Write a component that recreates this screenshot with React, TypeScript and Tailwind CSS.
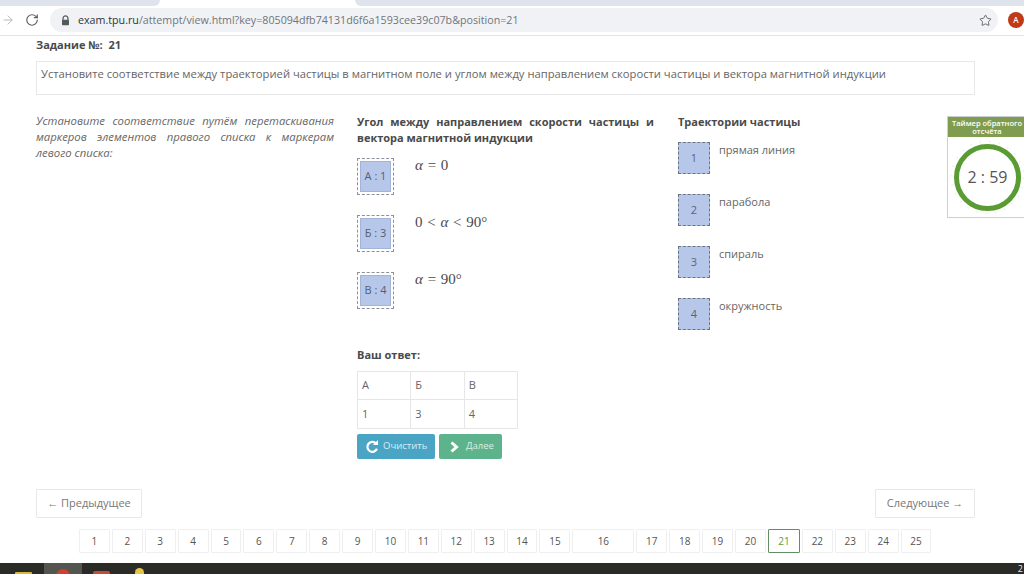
import React from "react";
import { ArrowRight, RotateCw, Star } from "lucide-react";

const sans = "font-['Open_Sans',sans-serif]";

function LeftRow({ label, children }: { label: string; children: React.ReactNode }) {
  return (
    <div className="flex h-[37px] mb-[20px]">
      <div className="w-[37px] h-[37px] border border-dashed border-[#8a909c] p-[2px] shrink-0">
        <div className="w-full h-full bg-[#b7c7ea] border border-[#a4b4d8] flex items-center justify-center text-[11px] text-[#55606f]">
          {label}
        </div>
      </div>
      <div className="ml-[21px] font-['Liberation_Serif',serif] text-[15px] leading-[14px] [word-spacing:1px] text-[#4a4a4a] whitespace-nowrap">
        {children}
      </div>
    </div>
  );
}

function RightRow({ n, text }: { n: string; text: string }) {
  return (
    <div className="flex h-[32px] mb-[20px]">
      <div className="w-[32px] h-[32px] border border-dashed border-[#6d7484] bg-[#b7c7ea] flex items-center justify-center text-[11px] text-[#5a6472] shrink-0">
        {n}
      </div>
      <div className="ml-[9px] text-[11px] leading-[16px] text-[#666] whitespace-nowrap">{text}</div>
    </div>
  );
}

function Page({ n }: { n: number }) {
  const active = n === 21;
  const wide = n === 16;
  return (
    <div
      className={`h-[24px] flex items-center justify-center text-[10px] rounded-[1px] border shrink-0 ${
        wide ? "w-[62px]" : active ? "w-[32px]" : "w-[30.9px]"
      } ${active ? "border-[#5f8f62] text-[#5f9a45]" : "border-[#efefef] text-[#555]"}`}
    >
      {n}
    </div>
  );
}

const pages = Array.from({ length: 25 }, (_, i) => i + 1);

export default function App() {
  return (
    <div className={`w-[1024px] h-[574px] overflow-hidden bg-white flex flex-col ${sans}`}>
      {/* tab strip */}
      <div className="h-[6px] flex shrink-0">
        <div className="w-[160px] bg-[#dfe3ec] rounded-br-[6px]" />
        <div className="w-[195px] bg-white" />
        <div className="flex-1 bg-[#dfe3ec] rounded-bl-[6px]" />
      </div>
      {/* toolbar */}
      <div className="h-[30px] shrink-0 flex items-center border-b border-[#e3e4e6] pb-[1px]">
        <ArrowRight size={14} strokeWidth={1.6} className="ml-[1px] text-[#b4b6ba]" />
        <RotateCw size={14} strokeWidth={2} className="ml-[10px] text-[#5c5f63]" />
        <div className="ml-[11px] w-[948px] h-[24px] shrink-0 rounded-[12px] bg-[#f0f2f5] flex items-center pl-[11px] text-[10.7px] whitespace-nowrap">
          <svg width="9" height="11" viewBox="0 0 9 11" className="shrink-0">
            <path d="M2 5V3.4a2.5 2.5 0 0 1 5 0V5" fill="none" stroke="#55585c" strokeWidth="1.2" />
            <rect x="1" y="4.8" width="7" height="5.4" rx="0.8" fill="#55585c" />
          </svg>
          <span className="ml-[8px] text-[#2f3236]">exam.tpu.ru</span>
          <span className="text-[#70757a]">/attempt/view.html?key=805094dfb74131d6f6a1593cee39c07b&amp;position=21</span>
          <Star size={13} strokeWidth={1.6} className="ml-auto mr-[6px] text-[#55585c]" />
        </div>
        <div className="ml-[10px] w-[16px] h-[16px] rounded-full bg-[#bf3a17] shrink-0 flex items-center justify-center text-white text-[8px] font-semibold">
          А
        </div>
      </div>

      {/* main */}
      <div className="flex-1 min-h-0 pl-[36px] overflow-hidden">
        <div className="mt-[1px] h-[16px] text-[11px] leading-[16px] font-bold text-[#4a4a4a]">Задание №:&nbsp; 21</div>
        <div className="mt-[8px] w-[939px] h-[34px] border border-[#e8e8e8] pl-[4px] pt-[3px] text-[11.22px] leading-[18px] text-[#666] whitespace-nowrap">
          Установите соответствие между траекторией частицы в магнитном поле и углом между направлением скорости частицы и вектора магнитной индукции
        </div>

        <div className="mt-[18px] flex w-[1000px]">
          <div className="w-[298px] shrink-0 text-[11.3px] leading-[16px] italic text-[#666] text-justify">
            Установите соответствие путём перетаскивания маркеров элементов правого списка к маркерам левого списка:
          </div>

          <div className="ml-[23px] w-[297px] shrink-0 pt-[1px]">
            <div className="text-[11px] leading-[16px] font-bold text-[#4a4a4a] text-justify h-[34px]">
              Угол между направлением скорости частицы и вектора магнитной индукции
            </div>
            <div className="mt-[10px] flex flex-col">
              <LeftRow label="А : 1">
                <i>α</i> = 0
              </LeftRow>
              <LeftRow label="Б : 3">
                0 &lt; <i>α</i> &lt; 90°
              </LeftRow>
              <LeftRow label="В : 4">
                <i>α</i> = 90°
              </LeftRow>
            </div>
            <div className="mt-[18px] text-[11px] leading-[16px] font-bold text-[#4a4a4a]">Ваш ответ:</div>
            <table className="mt-[8px] w-[161px] border-collapse text-[11px] text-[#666] table-fixed">
              <tbody>
                <tr className="h-[28px]">
                  <td className="border border-[#e6e6e6] pl-[4px]">А</td>
                  <td className="border border-[#e6e6e6] pl-[4px]">Б</td>
                  <td className="border border-[#e6e6e6] pl-[4px]">В</td>
                </tr>
                <tr className="h-[29px]">
                  <td className="border border-[#e6e6e6] pl-[4px]">1</td>
                  <td className="border border-[#e6e6e6] pl-[4px]">3</td>
                  <td className="border border-[#e6e6e6] pl-[4px]">4</td>
                </tr>
              </tbody>
            </table>
            <div className="mt-[5px] flex gap-[4px]">
              <div className="w-[78px] h-[25px] rounded-[2px] bg-[#4aa5c4] flex items-center pl-[8px] text-[9.5px] text-[#d8eef5]">
                <svg width="14" height="14" viewBox="0 0 14 14" className="shrink-0">
                  <path d="M11 3.4A5 5 0 1 0 12 8.8" fill="none" stroke="#ffffff" strokeWidth="2.2" />
                  <path d="M8 4.9h5V0z" fill="#ffffff" />
                </svg>
                <span className="ml-[4px]">Очистить</span>
              </div>
              <div className="w-[63px] h-[25px] rounded-[2px] bg-[#5cb38c] flex items-center pl-[11px] text-[9.5px] text-[#d8f0e5]">
                <svg width="10" height="12" viewBox="0 0 10 12" className="shrink-0">
                  <path d="M1.5 1.5 L6.5 6 L1.5 10.5" fill="none" stroke="#ffffff" strokeWidth="3" />
                </svg>
                <span className="ml-[6px]">Далее</span>
              </div>
            </div>
          </div>

          <div className="ml-[24px] w-[248px] shrink-0 pt-[1px]">
            <div className="text-[11px] leading-[16px] font-bold text-[#4a4a4a]">Траектории частицы</div>
            <div className="mt-[12px]">
              <RightRow n="1" text="прямая линия" />
              <RightRow n="2" text="парабола" />
              <RightRow n="3" text="спираль" />
              <RightRow n="4" text="окружность" />
            </div>
          </div>

          <div className="ml-[21px] mt-[3px] w-[80px] h-[102px] shrink-0 border border-[#ccd0d4] flex flex-col">
            <div className="h-[20px] bg-[#7f9c4f] text-white text-[7.5px] leading-[8px] font-semibold text-center pt-[2px] shrink-0">
              Таймер обратного
              <br />
              отсчёта
            </div>
            <div className="flex-1 flex items-center pl-[6px]">
              <div className="relative w-[67px] h-[67px] rounded-full border-[5px] border-[#5a9c33] flex items-center justify-center text-[16px] text-[#555] whitespace-nowrap">
                <svg width="77" height="77" viewBox="0 0 77 77" className="absolute left-[-10px] top-[-10px]">
                  <circle cx="38.5" cy="38.5" r="36" fill="none" stroke="#eef2ea" strokeWidth="2" strokeDasharray="1.5 8" />
                </svg>
                2 : 59
              </div>
            </div>
          </div>
        </div>

        {/* prev / next */}
        <div className="mt-[30px] w-[939px] flex justify-between text-[11px] text-[#777]">
          <div className="w-[106px] h-[29px] border border-[#e8e8e8] rounded-[1px] flex items-center justify-center">← Предыдущее</div>
          <div className="w-[100px] h-[29px] border border-[#e8e8e8] rounded-[1px] flex items-center justify-center">Следующее →</div>
        </div>

        {/* pagination */}
        <div className="mt-[11px] ml-[43px] flex gap-[2px]">
          {pages.map((n) => (
            <Page key={n} n={n} />
          ))}
        </div>
      </div>

      {/* taskbar */}
      <div className="h-[11px] shrink-0 bg-[#2a2a27] flex overflow-hidden">
        <div className="ml-[15px] mt-[9px] w-[17px] h-[6px] bg-[#d9b83e] rounded-t-[1px]" />
        <div className="ml-[12px] w-[38px] h-full bg-[#55554f] flex justify-center pt-[6px]">
          <div className="w-[14px] h-[14px] rounded-full bg-[#cf3f33]" />
        </div>
        <div className="ml-[11px] mt-[8px] w-[17px] h-[6px] bg-[#c8483a] rounded-t-[2px]" />
        <div className="ml-[25px] mt-[5px] w-[9px] h-[9px] bg-[#e5c544] rounded-t-full" />
        <div className="ml-auto mr-[1px] text-[9px] leading-[11px] text-[#e8e8e8]">2</div>
      </div>
    </div>
  );
}
